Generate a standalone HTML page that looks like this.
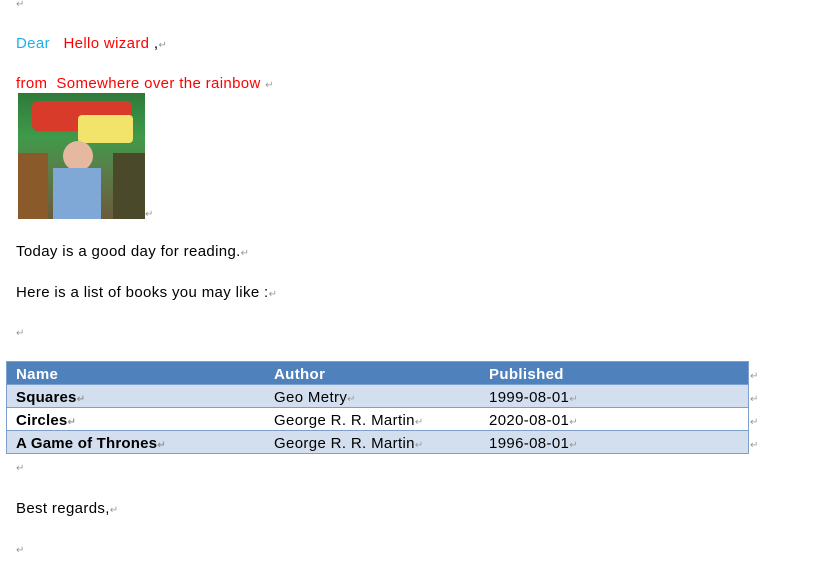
<!DOCTYPE html>
<html><head><style>
body{margin:0;width:825px;height:577px;background:#fff;font-family:"Liberation Sans",sans-serif;font-size:15px;letter-spacing:0.35px;color:#000;position:relative;overflow:hidden}
.t{position:absolute;white-space:nowrap;line-height:18px}
.r{color:#999;font-size:10px;letter-spacing:0}
.red{color:#f00}
.tbl{position:absolute;left:6px;top:361px;width:741px;border:1px solid #7ba0cd}
.row{position:relative;height:22px;border-top:1px solid #7ba0cd}
.row span{position:absolute;top:4px;line-height:18px;white-space:nowrap}
.row span span{position:static}
.h{background:#4f81bd;color:#fff;font-weight:bold;border-top:none;height:22px}
.a{background:#d3dfee}
.b{font-weight:bold;letter-spacing:0.2px}
</style></head><body>
<div class="t r" style="left:16px;top:-4px">↵</div>
<div class="t" style="left:16px;top:35px"><span style="color:#1fb1e6">Dear</span>&nbsp;&nbsp; <span class="red">Hello wizard</span> ,<span class="r">↵</span></div>
<div class="t red" style="left:16px;top:75px">from&nbsp; Somewhere over the rainbow <span class="r">↵</span></div>
<div style="position:absolute;left:18px;top:93px;width:127px;height:126px;background:linear-gradient(180deg,#2f7a3a 0%,#3f9a4a 35%,#5a7f4a 60%,#6a5a3a 100%);overflow:hidden">
<div style="position:absolute;left:14px;top:8px;width:100px;height:30px;background:#d83b2a;border-radius:6px"></div>
<div style="position:absolute;left:60px;top:22px;width:55px;height:28px;background:#f2e36a;border-radius:4px"></div>
<div style="position:absolute;left:45px;top:48px;width:30px;height:30px;background:#e5b9a0;border-radius:50%"></div>
<div style="position:absolute;left:35px;top:75px;width:48px;height:51px;background:#7fa8d6"></div>
<div style="position:absolute;left:0;top:60px;width:30px;height:66px;background:#8a5a2a"></div>
<div style="position:absolute;left:95px;top:60px;width:32px;height:66px;background:#4a4a2a"></div>
</div>
<div class="t r" style="left:145px;top:206px">↵</div>
<div class="t" style="left:16px;top:243px">Today is a good day for reading.<span class="r">↵</span></div>
<div class="t" style="left:16px;top:284px">Here is a list of books you may like :<span class="r">↵</span></div>
<div class="t r" style="left:16px;top:325px">↵</div>
<div class="tbl">
<div class="row h"><span style="left:9px">Name</span><span style="left:267px">Author</span><span style="left:482px">Published</span></div>
<div class="row a"><span class="b" style="left:9px">Squares<span class="r">↵</span></span><span style="left:267px">Geo Metry<span class="r">↵</span></span><span style="left:482px">1999-08-01<span class="r">↵</span></span></div>
<div class="row"><span class="b" style="left:9px">Circles<span class="r">↵</span></span><span style="left:267px">George R. R. Martin<span class="r">↵</span></span><span style="left:482px">2020-08-01<span class="r">↵</span></span></div>
<div class="row a"><span class="b" style="left:9px">A Game of Thrones<span class="r">↵</span></span><span style="left:267px">George R. R. Martin<span class="r">↵</span></span><span style="left:482px">1996-08-01<span class="r">↵</span></span></div>
</div>
<div class="t r" style="left:750px;top:368px">↵</div>
<div class="t r" style="left:750px;top:391px">↵</div>
<div class="t r" style="left:750px;top:414px">↵</div>
<div class="t r" style="left:750px;top:437px">↵</div>
<div class="t r" style="left:16px;top:460px">↵</div>
<div class="t" style="left:16px;top:500px">Best regards,<span class="r">↵</span></div>
<div class="t r" style="left:16px;top:542px">↵</div>
</body></html>
